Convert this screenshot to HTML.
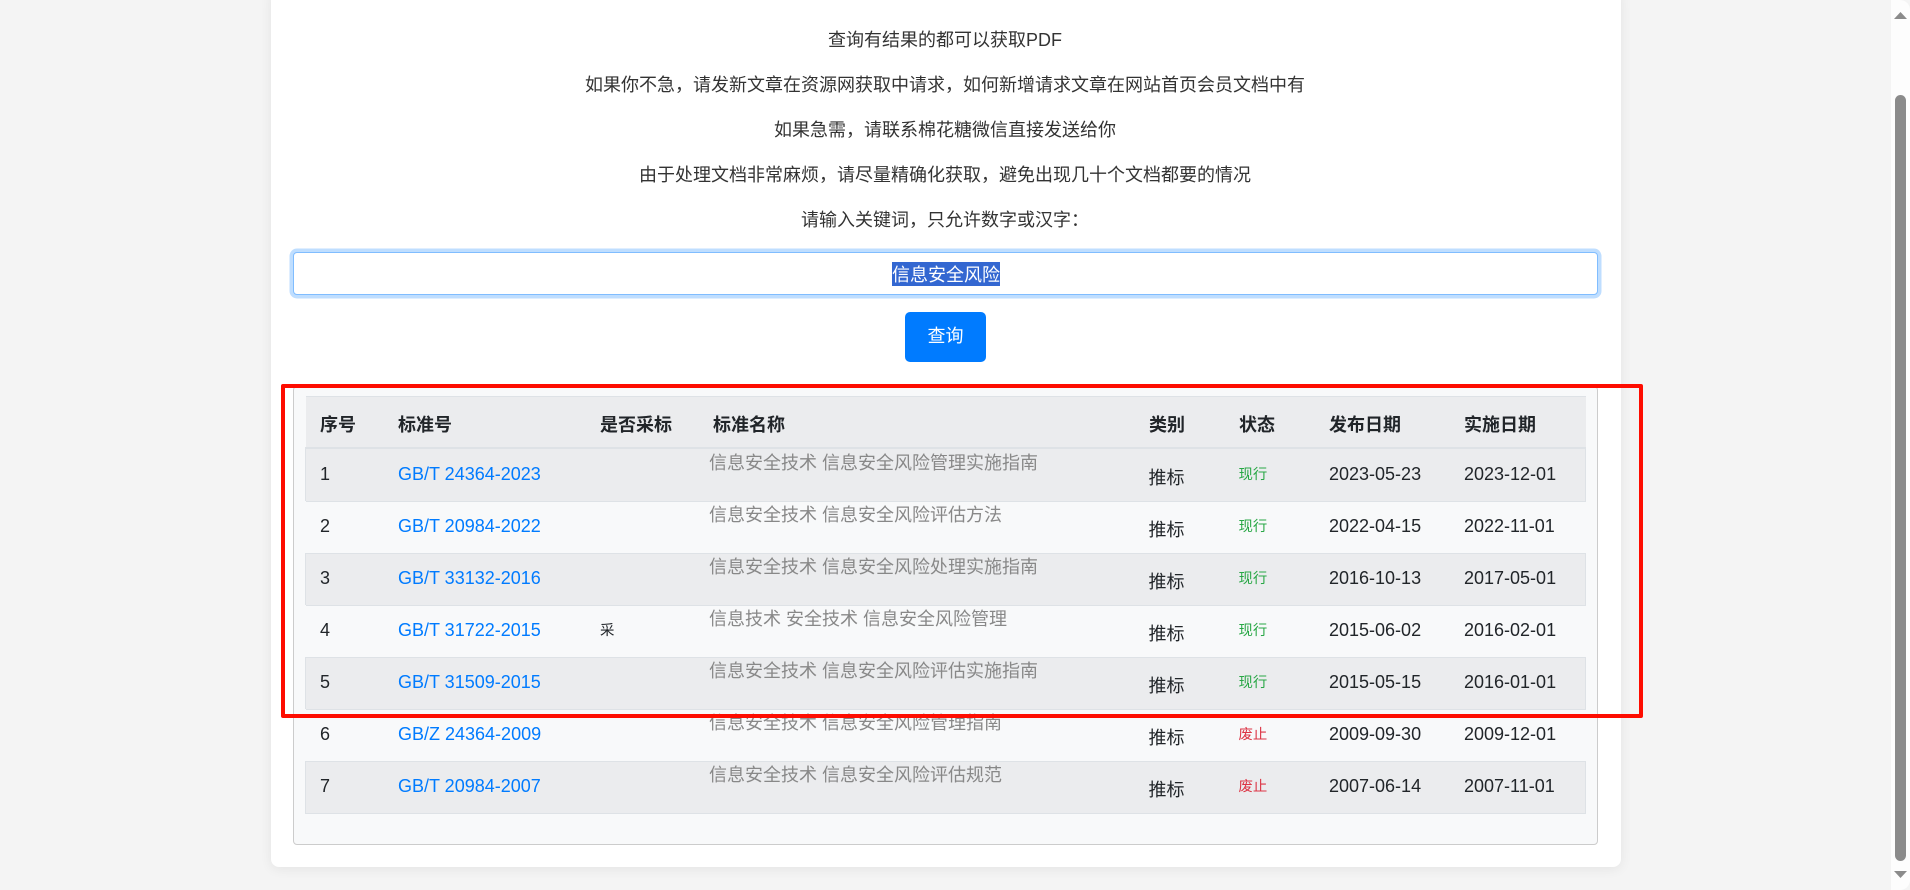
<!DOCTYPE html>
<html lang="zh-CN">
<head>
<meta charset="utf-8">
<title>查询</title>
<style>
html,body{margin:0;padding:0;width:1910px;height:890px;overflow:hidden;background:#f4f4f4;}
body{position:relative;font-family:"Liberation Sans","Noto Sans CJK SC",sans-serif;font-size:18px;color:#212529;}
div,a,span{position:absolute;white-space:nowrap;}
#card{left:271px;top:-10px;width:1350px;height:877px;background:#fff;border-radius:8px;box-shadow:0 2px 12px rgba(0,0,0,.07);}
.p{left:270px;width:1350px;text-align:center;height:27px;line-height:27px;color:#333;}
#input{left:293px;top:252px;width:1303px;height:41px;border:1px solid #80bdff;border-radius:4px;background:#fff;box-shadow:0 0 0 3.5px rgba(0,123,255,.25);}
#sel{left:892px;top:262px;width:108px;height:24px;line-height:26px;background:#3367d1;color:#fff;text-align:center;}
#btn{left:905px;top:312px;width:81px;height:50px;line-height:48px;background:#007bff;border-radius:5px;color:#fff;text-align:center;}
#panel{left:293px;top:386px;width:1303px;height:457px;background:#f8f9fa;border:1px solid #ccc;border-radius:4px;}
#thead{left:306px;top:396px;width:1280px;height:51px;background:#ebecee;border-top:1px solid #dee2e6;}
.r{left:305px;width:1279px;height:51px;border:1px solid #dee2e6;border-bottom:0;}
.o{background:#ebecee;}
.e{background:#f8f9fa;border-left:0;border-right:0;width:1280px;left:306px;}
.t{height:27px;line-height:27px;}
.h{font-weight:bold;color:#212529;}
.l{color:#007bff;}
.n{color:#888;}
.st{font-size:14.4px;line-height:20px;height:20px;}
.g{color:#28a745;}
.d{color:#dc3545;}
#red{left:281px;top:384px;width:1354px;height:326px;border:4px solid #fe0c00;border-radius:2px;}
#sb{left:1891px;top:0;width:19px;height:890px;background:#fdfdfd;border-radius:0 10px 10px 0;}
#thumb{left:1895px;top:95px;width:11px;height:766px;background:#8b8b8b;border-radius:6px;}
</style>
</head>
<body>
<div id="card"></div>
<div class="p" style="top:27px">查询有结果的都可以获取PDF</div>
<div class="p" style="top:72px">如果你不急，请发新文章在资源网获取中请求，如何新增请求文章在网站首页会员文档中有</div>
<div class="p" style="top:117px">如果急需，请联系棉花糖微信直接发送给你</div>
<div class="p" style="top:162px">由于处理文档非常麻烦，请尽量精确化获取，避免出现几十个文档都要的情况</div>
<div class="p" style="top:207px">请输入关键词，只允许数字或汉字：</div>
<div id="input"></div>
<div id="sel">信息安全风险</div>
<div id="btn">查询</div>

<div id="panel"></div>
<div id="thead"></div>
<div class="r o" style="top:447px;border-top-width:2px;height:52px"></div>
<div class="r e" style="top:501px"></div>
<div class="r o" style="top:553px"></div>
<div class="r e" style="top:605px"></div>
<div class="r o" style="top:657px"></div>
<div class="r e" style="top:709px"></div>
<div class="r o" style="top:761px;border-bottom:1px solid #dee2e6"></div>

<span class="t h" style="left:320px;top:412px">序号</span>
<span class="t h" style="left:398px;top:412px">标准号</span>
<span class="t h" style="left:600px;top:412px">是否采标</span>
<span class="t h" style="left:713px;top:412px">标准名称</span>
<span class="t h" style="left:1149px;top:412px">类别</span>
<span class="t h" style="left:1239px;top:412px">状态</span>
<span class="t h" style="left:1329px;top:412px">发布日期</span>
<span class="t h" style="left:1464px;top:412px">实施日期</span>

<span class="t" style="left:320px;top:461px">1</span>
<a class="t l" style="left:398px;top:461px">GB/T 24364-2023</a>
<span class="t n" style="left:709px;top:450px">信息安全技术 信息安全风险管理实施指南</span>
<span class="t" style="left:1148.5px;top:465px">推标</span>
<span class="st g" style="left:1238.5px;top:465px">现行</span>
<span class="t" style="left:1329px;top:461px">2023-05-23</span>
<span class="t" style="left:1464px;top:461px">2023-12-01</span>

<span class="t" style="left:320px;top:513px">2</span>
<a class="t l" style="left:398px;top:513px">GB/T 20984-2022</a>
<span class="t n" style="left:709px;top:502px">信息安全技术 信息安全风险评估方法</span>
<span class="t" style="left:1148.5px;top:517px">推标</span>
<span class="st g" style="left:1238.5px;top:517px">现行</span>
<span class="t" style="left:1329px;top:513px">2022-04-15</span>
<span class="t" style="left:1464px;top:513px">2022-11-01</span>

<span class="t" style="left:320px;top:565px">3</span>
<a class="t l" style="left:398px;top:565px">GB/T 33132-2016</a>
<span class="t n" style="left:709px;top:554px">信息安全技术 信息安全风险处理实施指南</span>
<span class="t" style="left:1148.5px;top:569px">推标</span>
<span class="st g" style="left:1238.5px;top:569px">现行</span>
<span class="t" style="left:1329px;top:565px">2016-10-13</span>
<span class="t" style="left:1464px;top:565px">2017-05-01</span>

<span class="t" style="left:320px;top:617px">4</span>
<a class="t l" style="left:398px;top:617px">GB/T 31722-2015</a>
<span class="st" style="left:600px;top:621px">采</span>
<span class="t n" style="left:709px;top:606px">信息技术 安全技术 信息安全风险管理</span>
<span class="t" style="left:1148.5px;top:621px">推标</span>
<span class="st g" style="left:1238.5px;top:621px">现行</span>
<span class="t" style="left:1329px;top:617px">2015-06-02</span>
<span class="t" style="left:1464px;top:617px">2016-02-01</span>

<span class="t" style="left:320px;top:669px">5</span>
<a class="t l" style="left:398px;top:669px">GB/T 31509-2015</a>
<span class="t n" style="left:709px;top:658px">信息安全技术 信息安全风险评估实施指南</span>
<span class="t" style="left:1148.5px;top:673px">推标</span>
<span class="st g" style="left:1238.5px;top:673px">现行</span>
<span class="t" style="left:1329px;top:669px">2015-05-15</span>
<span class="t" style="left:1464px;top:669px">2016-01-01</span>

<span class="t" style="left:320px;top:721px">6</span>
<a class="t l" style="left:398px;top:721px">GB/Z 24364-2009</a>
<span class="t n" style="left:709px;top:710px">信息安全技术 信息安全风险管理指南</span>
<span class="t" style="left:1148.5px;top:725px">推标</span>
<span class="st d" style="left:1238.5px;top:725px">废止</span>
<span class="t" style="left:1329px;top:721px">2009-09-30</span>
<span class="t" style="left:1464px;top:721px">2009-12-01</span>

<span class="t" style="left:320px;top:773px">7</span>
<a class="t l" style="left:398px;top:773px">GB/T 20984-2007</a>
<span class="t n" style="left:709px;top:762px">信息安全技术 信息安全风险评估规范</span>
<span class="t" style="left:1148.5px;top:777px">推标</span>
<span class="st d" style="left:1238.5px;top:777px">废止</span>
<span class="t" style="left:1329px;top:773px">2007-06-14</span>
<span class="t" style="left:1464px;top:773px">2007-11-01</span>

<div id="red"></div>

<div id="sb"></div>
<div id="thumb"></div>
<svg style="position:absolute;left:1891px;top:0" width="19" height="890" viewBox="0 0 19 890">
<path d="M3 19 L9.5 12 L16 19 Z" fill="#8b8b8b"/>
<path d="M3 871 L16 871 L9.5 878 Z" fill="#8b8b8b"/>
</svg>
</body>
</html>
